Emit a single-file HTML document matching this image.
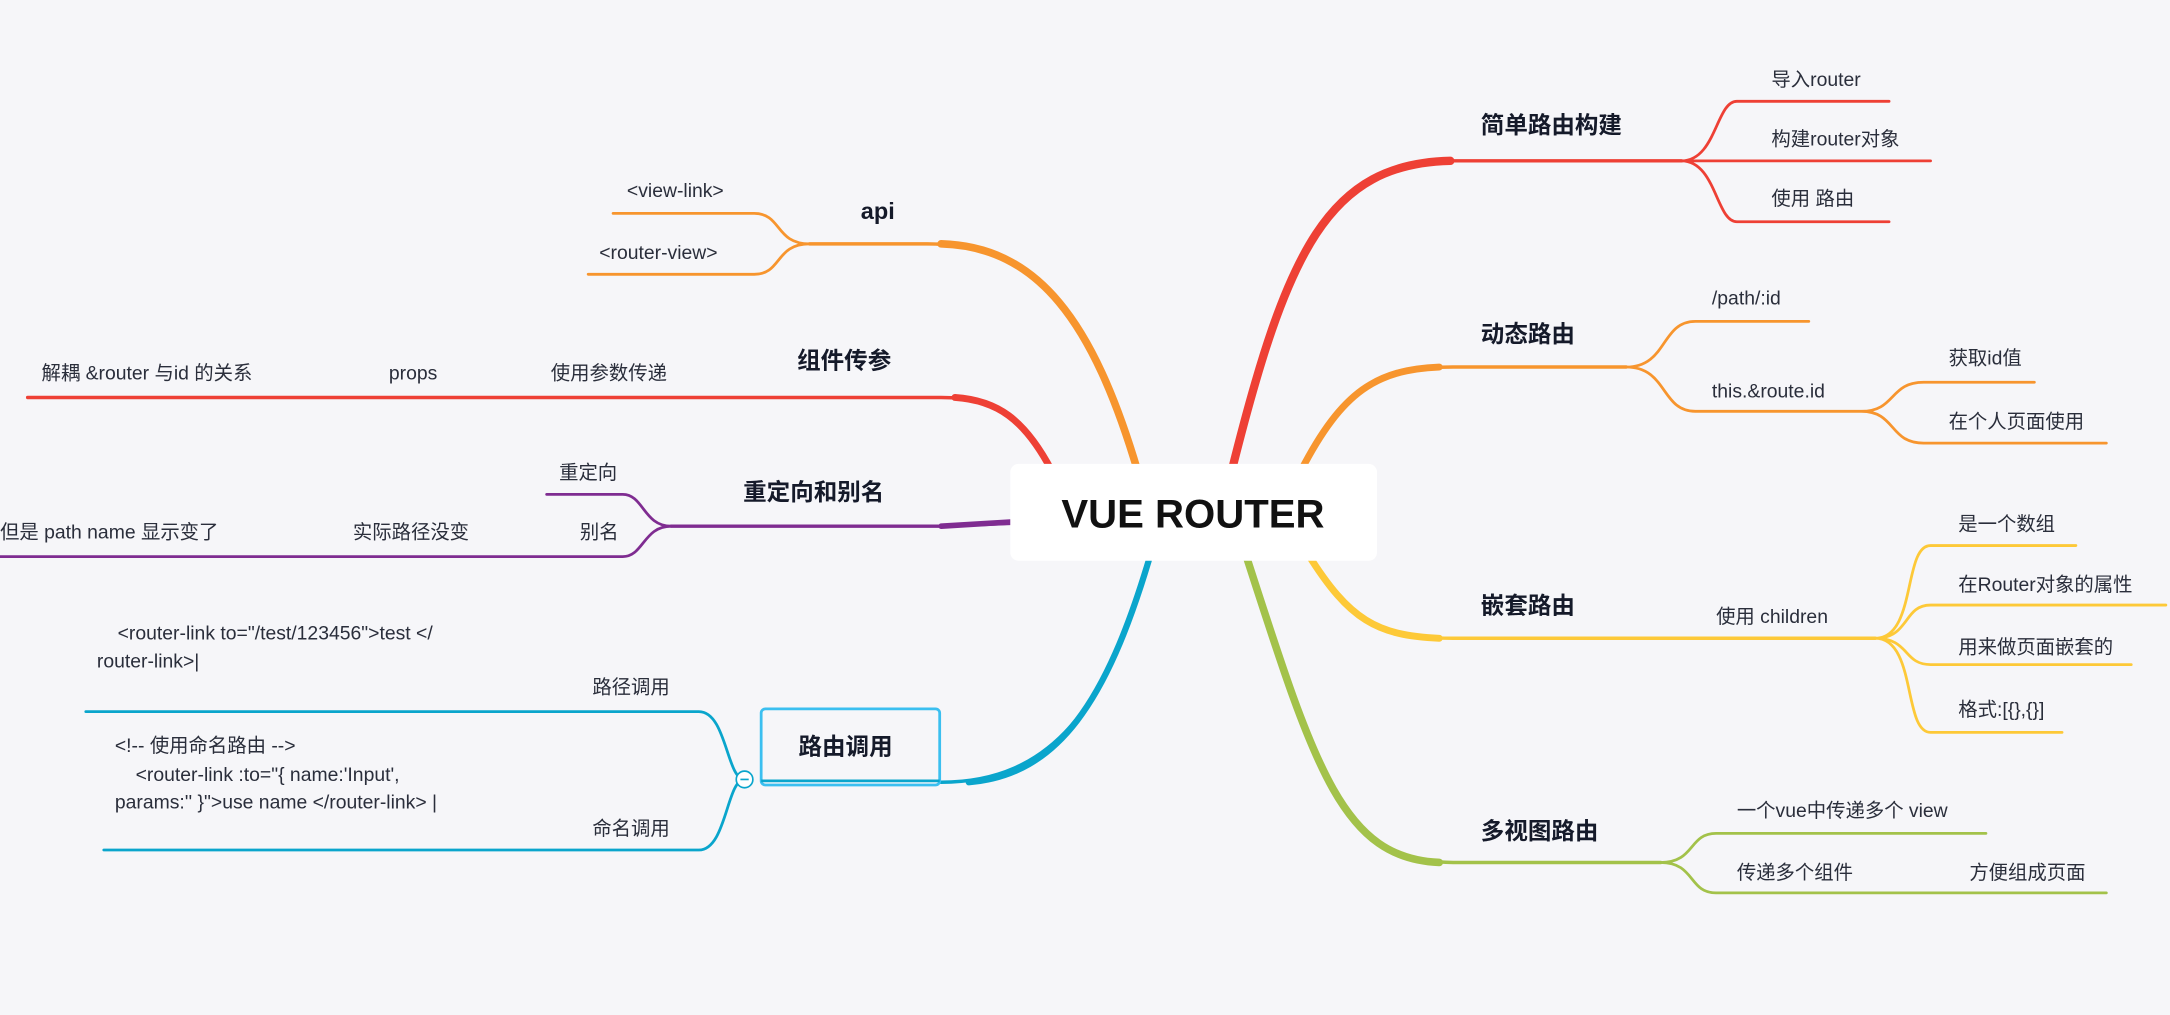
<!DOCTYPE html>
<html><head><meta charset="utf-8"><style>
html,body{margin:0;padding:0;background:#f6f6f9;}
svg{display:block}
text{font-family:"Liberation Sans","Noto Sans CJK SC",sans-serif;fill:#2a2e3b;}
.t{font-size:14px}
.h{font-size:17px;font-weight:bold;fill:#151a2a}
</style></head><body>
<svg width="2170" height="1015" viewBox="0 0 1568 733" xmlns="http://www.w3.org/2000/svg">
<rect width="1568" height="733" fill="#f6f6f9"/>
<g fill="none" stroke-linecap="round">
<path d="M890 340 C930 180 960 116 1050 116 L1215 116" stroke="#ee4035" stroke-width="2.5"/>
<path d="M890 340 C930 180 960 118 1048 116" stroke="#ee4035" stroke-width="6"/>
<path d="M1215 116 C1240 116 1240 73 1255 73 L1365 73 M1215 116 L1395 116 M1215 116 C1240 116 1240 160 1255 160 L1365 160" stroke="#ee4035" stroke-width="2"/>

<path d="M940 340 C970 280 1000 265 1050 265 L1175 265" stroke="#f7952e" stroke-width="2.5"/>
<path d="M940 340 C970 282 995 267 1040 265" stroke="#f7952e" stroke-width="5"/>
<path d="M1175 265 C1205 265 1200 232 1225 232 L1307 232 M1175 265 C1205 265 1200 297 1225 297 L1345 297 C1370 297 1365 276 1390 276 L1470 276 M1345 297 C1370 297 1365 320 1390 320 L1522 320" stroke="#f7952e" stroke-width="2"/>

<path d="M945 400 C975 450 1000 461 1050 461 L1355 461" stroke="#fdc938" stroke-width="2.5"/>
<path d="M945 400 C975 448 995 459 1040 461" stroke="#fdc938" stroke-width="5"/>
<path d="M1355 461 C1385 461 1375 394 1395 394 L1500 394 M1355 461 C1380 461 1375 437 1395 437 L1565 437 M1355 461 C1380 461 1375 480 1395 480 L1540 480 M1355 461 C1385 461 1375 529 1395 529 L1490 529" stroke="#fdc938" stroke-width="2"/>

<path d="M900 400 C950 560 970 623 1050 623 L1200 623" stroke="#a3c24a" stroke-width="2.5"/>
<path d="M900 400 C950 555 970 620 1040 623" stroke="#a3c24a" stroke-width="5.5"/>
<path d="M1200 623 C1225 623 1220 602 1240 602 L1435 602 M1200 623 C1225 623 1220 645 1240 645 L1522 645" stroke="#a3c24a" stroke-width="2"/>

<path d="M822 340 C790 230 750 176 670 176 L585 176" stroke="#f7952e" stroke-width="2.5"/>
<path d="M822 340 C790 232 750 178 680 176" stroke="#f7952e" stroke-width="5.5"/>
<path d="M585 176 C560 176 565 154 545 154 L443 154 M585 176 C560 176 565 198 545 198 L425 198" stroke="#f7952e" stroke-width="2"/>

<path d="M760 340 C740 300 720 287 680 287 L20 287" stroke="#ee4035" stroke-width="2.5"/>
<path d="M760 340 C740 302 720 289 690 287" stroke="#ee4035" stroke-width="5"/>

<path d="M730 378 L680 380 L485 380" stroke="#7f2c91" stroke-width="2.5"/>
<path d="M730 377 L680 380" stroke="#7f2c91" stroke-width="4"/>
<path d="M485 380 C465 380 465 357 450 357 L395 357 M485 380 C465 380 465 402 450 402 L0 402" stroke="#7f2c91" stroke-width="2"/>

<path d="M830 405 C800 510 760 565 680 565" stroke="#0aa5cc" stroke-width="2.5"/>
<path d="M830 405 C800 505 765 560 700 565" stroke="#0aa5cc" stroke-width="4.5"/>
<path d="M538 563 C525 563 525 514 505 514 L62 514 M538 563 C525 563 525 614 505 614 L75 614" stroke="#0aa5cc" stroke-width="2"/>
</g>
<rect x="550" y="512" width="129" height="55" rx="3" fill="#f6f6f9" stroke="#3bbff0" stroke-width="2"/>
<line x1="550" y1="564" x2="679" y2="564" stroke="#0aa5cc" stroke-width="2"/>
<circle cx="538" cy="563" r="6" fill="#fff" stroke="#0aa5cc" stroke-width="1.2"/>
<line x1="535" y1="563" x2="541" y2="563" stroke="#0aa5cc" stroke-width="1.2"/>

<rect x="730" y="335" width="265" height="70" rx="6" fill="#fff"/>
<text x="862" y="381" text-anchor="middle" style="font-size:29px;font-weight:bold;fill:#111">VUE ROUTER</text>

<text class="h" x="1070" y="96">简单路由构建</text>
<text class="t" x="1280" y="62">导入router</text>
<text class="t" x="1280" y="105">构建router对象</text>
<text class="t" x="1280" y="148">使用 路由</text>

<text class="h" x="1070" y="247">动态路由</text>
<text class="t" x="1237" y="220">/path/:id</text>
<text class="t" x="1237" y="287">this.&amp;route.id</text>
<text class="t" x="1408" y="263">获取id值</text>
<text class="t" x="1408" y="309">在个人页面使用</text>

<text class="h" x="1070" y="443">嵌套路由</text>
<text class="t" x="1240" y="450">使用 children</text>
<text class="t" x="1415" y="383">是一个数组</text>
<text class="t" x="1415" y="427">在Router对象的属性</text>
<text class="t" x="1415" y="472">用来做页面嵌套的</text>
<text class="t" x="1415" y="517">格式:[{},{}]</text>

<text class="h" x="1070" y="606">多视图路由</text>
<text class="t" x="1255" y="590">一个vue中传递多个 view</text>
<text class="t" x="1255" y="635">传递多个组件</text>
<text class="t" x="1423" y="635">方便组成页面</text>

<text class="h" x="622" y="158">api</text>
<text class="t" x="453" y="142">&lt;view-link&gt;</text>
<text class="t" x="433" y="187">&lt;router-view&gt;</text>

<text class="h" x="576" y="266">组件传参</text>
<text class="t" x="398" y="274">使用参数传递</text>
<text class="t" x="281" y="274">props</text>
<text class="t" x="30" y="274">解耦  &amp;router 与id 的关系</text>

<text class="h" x="537" y="361">重定向和别名</text>
<text class="t" x="404" y="346">重定向</text>
<text class="t" x="419" y="389">别名</text>
<text class="t" x="255" y="389">实际路径没变</text>
<text class="t" x="0" y="389">但是 path name 显示变了</text>

<text class="h" x="577" y="545">路由调用</text>
<text class="t" x="428" y="501">路径调用</text>
<text class="t" x="428" y="603">命名调用</text>
<text class="t" x="85" y="462">&lt;router-link to="/test/123456"&gt;test  &lt;/</text>
<text class="t" x="70" y="482">router-link&gt;|</text>
<text class="t" x="83" y="543">&lt;!--   使用命名路由 --&gt;</text>
<text class="t" x="98" y="564">&lt;router-link :to="{ name:'Input',</text>
<text class="t" x="83" y="584">params:'' }"&gt;use name &lt;/router-link&gt; |</text>
</svg>
</body></html>
